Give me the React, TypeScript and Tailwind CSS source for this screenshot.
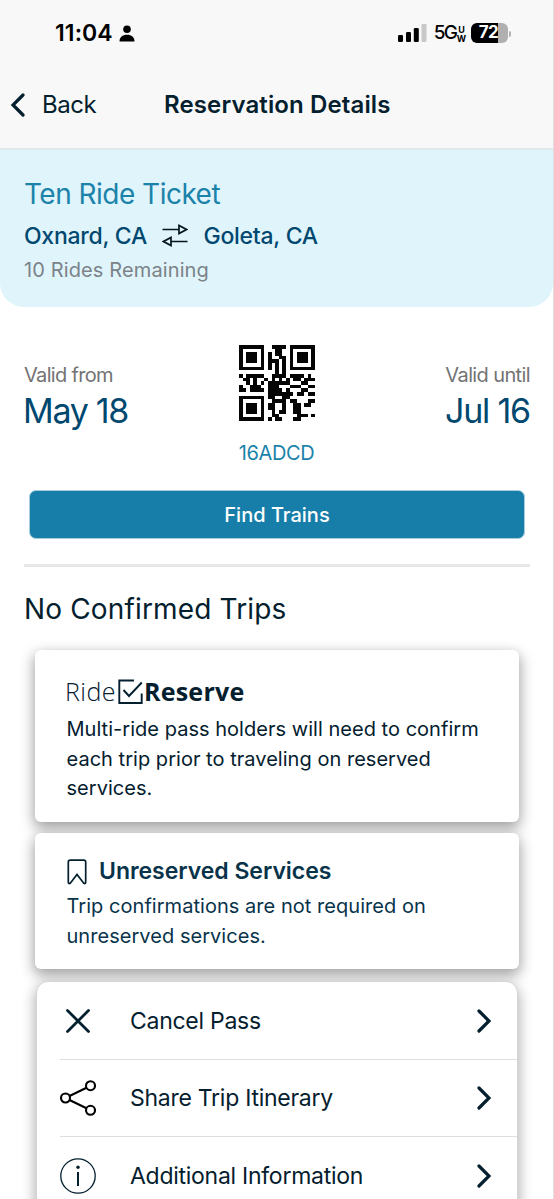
import { ReactNode } from 'react';

const QR_ROWS = [
    'XXXXXXX..XXXX.XXXXXXX',
    'X.....X...XX..X.....X',
    'X.XXX.X.X.XX..X.XXX.X',
    'X.XXX.X.X..XX.X.XXX.X',
    'X.XXX.X.XXX.X.X.XXX.X',
    'X.....X.X.X.X.X.....X',
    'XXXXXXX.X.X.X.XXXXXXX',
    '..........X.X........',
    'X.XXXXX..XXXX.XXXX.X.',
    '.XX.X..X.X.X.X.XX.XXX',
    '..X.X.X.XXXXXX...XX..',
    'X..XXX..XXX...XXX..XX',
    'XX.XXXX.XXXX.X...XX..',
    '........XXXXXXX.XX.XX',
    'XXXXXXX.XX..XX.......',
    'X.....X..XXXX.XX...XX',
    'X.XXX.X.XX..X..XX.XX.',
    'X.XXX.X.XX..X..XX....',
    'X.XXX.X..X.XX..XX....',
    'X.....X..XX.....XXX.X',
    'XXXXXXX.X.XX...XX....',
];

function QrCode() {
    return (
        <svg className="w-[76px] h-[76px] shrink-0" viewBox="0 0 21 21" shapeRendering="crispEdges">
            {QR_ROWS.map((row, y) =>
                row.split('').map((cell, x) =>
                    cell === 'X' ? <rect key={`${x}-${y}`} x={x} y={y} width="1" height="1" fill="#050505" /> : null
                )
            )}
        </svg>
    );
}

function StatusBar() {
    return (
        <div className="flex items-center justify-between h-[67px] pl-[55px] pr-[43px] text-black">
            <div className="flex items-center">
                <span className="text-[23px] font-semibold tracking-[0.100px]">11:04</span>
                <svg className="w-4 h-[17px] ml-[6px]" viewBox="0 0 16 17">
                    <circle cx="8" cy="4.3" r="3.8" />
                    <path d="M0.5 16.5C0.5 12 3.5 9.7 8 9.7s7.500 2.300 7.500 6.800z" />
                </svg>
            </div>
            <div className="flex items-center">
                <svg className="w-[29px] h-[18px] -mt-[1px]" viewBox="0 0 29 18">
                    <rect x="0" y="11" width="5" height="7" rx="1.300" />
                    <rect x="8" y="8" width="5" height="10" rx="1.300" />
                    <rect x="15.800" y="4" width="5" height="14" rx="1.300" />
                    <rect x="23.500" y="0" width="5" height="18" rx="1.300" fill="#c8c8c8" />
                </svg>
                <span className="ml-[7px] text-[19px] font-medium tracking-[-1.900px]">5G</span>
                <span className="ml-[1px] w-[9px] flex flex-col items-center text-[9px] leading-[9px] font-bold">
                    <span>U</span>
                    <span>W</span>
                </span>
                <div className="ml-[5px] -mt-[1px] w-[37px] h-5 rounded-[6px] overflow-hidden flex items-center justify-center bg-[linear-gradient(to_right,#000_72%,#b0b0b0_72%)] text-white text-[17px] font-bold tracking-[-0.5px]">
                    <span className="-ml-[2px]">72</span>
                </div>
                <span className="ml-[1px] -mr-[1px] w-[2px] h-[6px] rounded-r bg-[#b0b0b0]" />
            </div>
        </div>
    );
}

function Chevron({ className }: { className?: string }) {
    return (
        <svg className={className} viewBox="0 0 14 24" fill="none" stroke="#04202e" strokeWidth="3.200" strokeLinecap="round">
            <path d="M2 2l10 10L2 22" />
        </svg>
    );
}

function SwapIcon() {
    return (
        <svg className="w-[26px] h-[23px] ml-[15.500px] mr-[15px] -mt-[2px]" viewBox="0 0 26 23" fill="none" stroke="#06141c" strokeWidth="1.700">
            <path d="M0.500 5.500H17M17 1.500v8l7.500-4z" />
            <path d="M25.500 17.500H9M9 13.500v8l-7.500-4z" />
        </svg>
    );
}

function ActionRow({ icon, label, last }: { icon: ReactNode; label: string; last?: boolean }) {
    return (
        <div className={`ml-[23px] h-[77px] flex items-center border-[#dcdfe1] ${last ? '' : 'border-b'}`}>
            <div className="w-9 h-9 flex items-center justify-center">{icon}</div>
            <span className="ml-[34px] pt-[1px] flex-1 text-[23px] tracking-[-0.270px]">{label}</span>
            <Chevron className="w-[14px] h-6 mr-[26px]" />
        </div>
    );
}

export default function App() {
    return (
        <div className="w-[554px] h-[1199px] overflow-hidden bg-white border-r border-[#dedede] font-['Inter',sans-serif] text-[#04202e]">
            <header className="h-[150px] bg-[#f8f8f8] border-b-2 border-[#dfe8eb]">
                <StatusBar />
                <div className="flex items-center h-[76px]">
                    <Chevron className="w-[14px] h-6 ml-[11px] rotate-180" />
                    <span className="ml-[17px] w-[122px] text-[24px] tracking-[-0.5px]">Back</span>
                    <h1 className="text-[24px] font-semibold tracking-[0.120px] whitespace-nowrap">Reservation Details</h1>
                </div>
            </header>

            <section className="h-[157px] pt-[26px] pl-6 bg-[#e0f4fc] rounded-b-[24px]">
                <h2 className="text-[28px] leading-9 text-[#1b83aa] tracking-[-0.520px]">Ten Ride Ticket</h2>
                <div className="mt-[8px] flex items-center text-[23px] leading-8 font-medium text-[#00486f] tracking-[-0.260px]">
                    <span>Oxnard, CA</span>
                    <SwapIcon />
                    <span>Goleta, CA</span>
                </div>
                <p className="mt-[4px] text-[20px] leading-7 text-[#7b8388] tracking-[0.120px]">10 Rides Remaining</p>
            </section>

            <section className="mt-[38px] h-[120px] pl-[23px] pr-[23px] flex justify-between">
                <div className="w-[140px] pt-[16px]">
                    <p className="ml-[1px] text-[20px] leading-7 text-[#737373] tracking-[-0.680px]">Valid from</p>
                    <p className="mt-[1px] text-[34px] leading-[42px] text-[#00486f] tracking-[-1.300px]">May 18</p>
                </div>
                <div className="flex flex-col items-center">
                    <QrCode />
                    <p className="mt-[18px] text-[20px] leading-7 text-[#1b83aa] tracking-[-0.400px]">16ADCD</p>
                </div>
                <div className="w-[140px] pt-[16px] text-right">
                    <p className="text-[20px] leading-7 text-[#737373] tracking-[-0.620px]">Valid until</p>
                    <p className="mt-[1px] text-[34px] leading-[42px] text-[#00486f] tracking-[-1.200px]">Jul 16</p>
                </div>
            </section>

            <button className="mt-[25px] ml-[29px] w-[496px] h-[49px] block rounded-[7px] border border-[#a5cddd] bg-[#167ea8] text-white text-[20px] font-medium">
                Find Trains
            </button>

            <div className="mt-[25px] ml-6 mr-[23px] h-[3px] bg-[#e5e7e9]" />
            <h2 className="mt-[23px] ml-6 text-[28px] leading-[38px] tracking-[0.150px]">No Confirmed Trips</h2>

            <div className="mt-[22px] ml-[35px] w-[484px] h-[172px] px-8 pt-[26px] rounded-[6px] bg-white shadow-[0_5px_14px_1px_rgba(0,0,0,0.38)]">
                <div className="flex items-center h-[32px] -ml-[2px] font-['Open_Sans',sans-serif] text-[25px]">
                    <span className="font-light tracking-[0.450px]">Ride</span>
                    <svg className="w-[25px] h-[25px] ml-[2px] mr-[1px] -mt-[2px]" viewBox="0 0 25 25" fill="none" stroke="#04202e" strokeWidth="1.900">
                        <path d="M16 1.500H1.300v22.500h22.400V14.500" />
                        <path d="M5.500 11l5.500 6L23.800 3.500" />
                    </svg>
                    <span className="font-bold tracking-[0.250px]">Reserve</span>
                </div>
                <p className="mt-[7px] -ml-[0.500px] text-[20px] leading-[29.500px] tracking-[0.030px]">
                    Multi-ride pass holders will need to confirm
                    <br />
                    each trip prior to traveling on reserved
                    <br />
                    services.
                </p>
            </div>

            <div className="mt-[11px] relative ml-[35px] w-[484px] h-[136px] px-8 pt-[22px] rounded-[6px] bg-white text-[#08334a] shadow-[0_5px_14px_1px_rgba(0,0,0,0.38)]">
                <div className="flex items-center h-[32px]">
                    <svg className="w-5 h-[26px] mt-[2px]" viewBox="0 0 20 26" fill="none" stroke="#04202e" strokeWidth="1.700">
                        <path d="M3.300 1.200H16.700Q18.700 1.200 18.700 3.200V23Q18.700 25.600 16.500 24L10 15.500L3.500 24Q1.300 25.600 1.300 23V3.200Q1.300 1.200 3.300 1.200z" />
                    </svg>
                    <h3 className="ml-[12px] text-[23px] font-semibold tracking-[-0.030px]">Unreserved Services</h3>
                </div>
                <p className="mt-[5px] -ml-[0.500px] text-[20px] leading-[29.500px] tracking-[0.040px]">
                    Trip confirmations are not required on
                    <br />
                    unreserved services.
                </p>
            </div>

            <div className="mt-[12px] pt-[1px] relative ml-[36px] w-[482px] h-[260px] rounded-t-[12px] border border-[#d5d5d5] bg-white shadow-[0_5px_14px_1px_rgba(0,0,0,0.32)]">
                <ActionRow
                    label="Cancel Pass"
                    icon={
                        <svg className="w-6 h-6" viewBox="0 0 24 24" stroke="#04202e" strokeWidth="2.800" strokeLinecap="round">
                            <path d="M1.500 1.500l21 21M22.500 1.500l-21 21" />
                        </svg>
                    }
                />
                <ActionRow
                    label="Share Trip Itinerary"
                    icon={
                        <svg className="w-9 h-9" viewBox="0 0 36 36" fill="none" stroke="#000" strokeWidth="2.100">
                            <circle cx="5.500" cy="18" r="4.500" />
                            <circle cx="30.500" cy="5.700" r="4.500" />
                            <circle cx="30.500" cy="30.300" r="4.500" />
                            <path d="M9.500 16L26.500 7.700M9.500 20L26.500 28.300" />
                        </svg>
                    }
                />
                <ActionRow
                    last
                    label="Additional Information"
                    icon={
                        <svg className="w-9 h-9" viewBox="0 0 36 36" fill="none" stroke="#04202e">
                            <circle cx="18" cy="18" r="17.200" strokeWidth="1.300" />
                            <path d="M18 14v14" strokeWidth="2" />
                            <circle cx="18" cy="9.300" r="1.700" fill="#04202e" stroke="none" />
                        </svg>
                    }
                />
            </div>
        </div>
    );
}
